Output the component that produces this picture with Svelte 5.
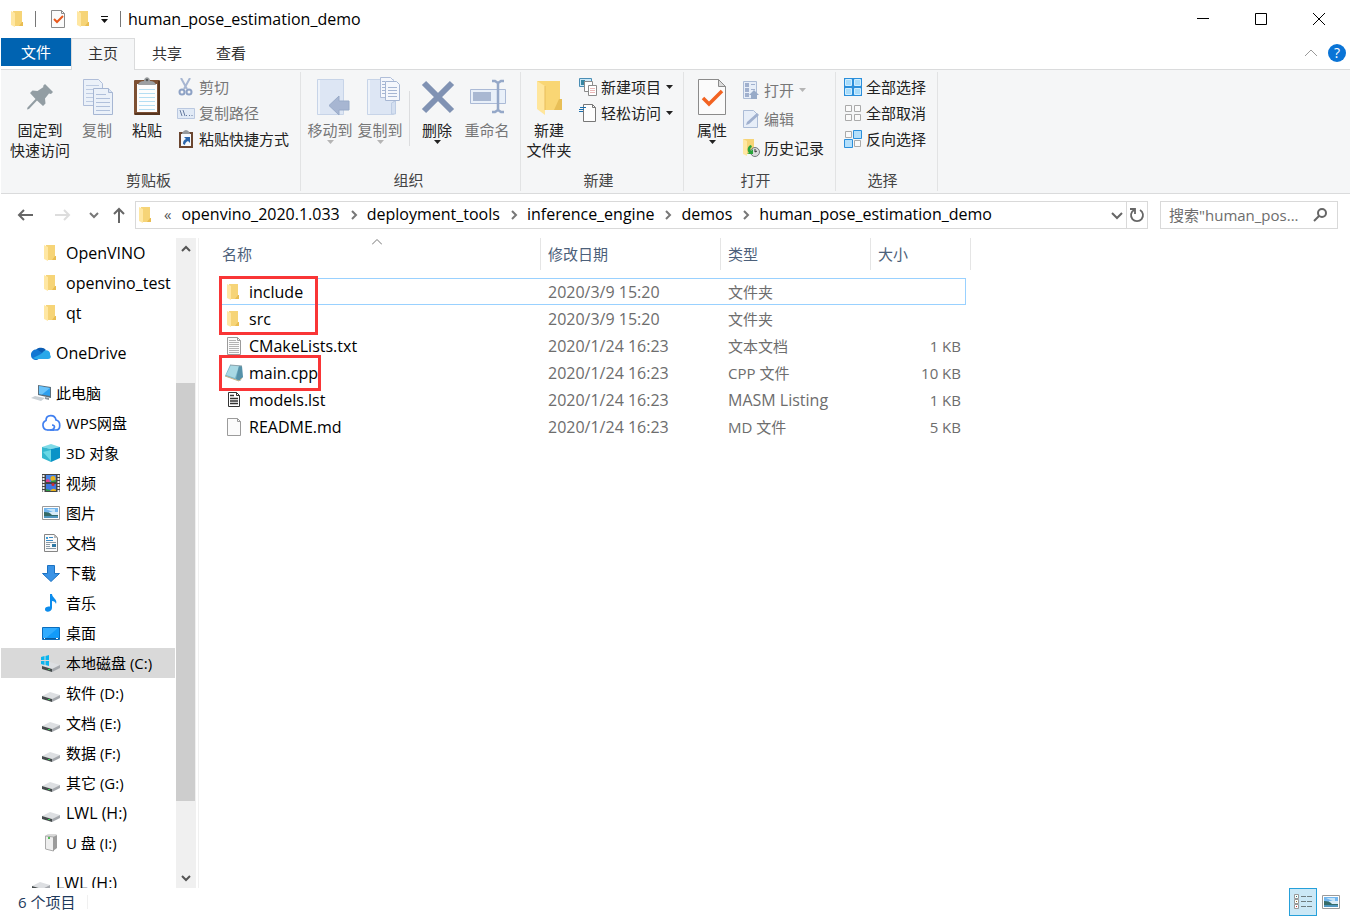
<script>
  let selected = $state('本地磁盘 (C:)');
  let focused = $state('include');
  let keyword = $state('');

  const tabs = ['主页', '共享', '查看'];
  let activeTab = $state('主页');

  const crumbs = ['openvino_2020.1.033', 'deployment_tools', 'inference_engine', 'demos', 'human_pose_estimation_demo'];

  // navigation pane, grouped the way the gaps fall
  const tree = [
    [
      { name: 'OpenVINO', icon: 'folder', level: 2 },
      { name: 'openvino_test', icon: 'folder', level: 2 },
      { name: 'qt', icon: 'folder', level: 2 }
    ],
    [{ name: 'OneDrive', icon: 'onedrive', level: 1 }],
    [
      { name: '此电脑', icon: 'pc', level: 1 },
      { name: 'WPS网盘', icon: 'wps', level: 2 },
      { name: '3D 对象', icon: 'cube', level: 2 },
      { name: '视频', icon: 'video', level: 2 },
      { name: '图片', icon: 'picture', level: 2 },
      { name: '文档', icon: 'document', level: 2 },
      { name: '下载', icon: 'download', level: 2 },
      { name: '音乐', icon: 'music', level: 2 },
      { name: '桌面', icon: 'desktop', level: 2 },
      { name: '本地磁盘 (C:)', icon: 'system', level: 2 },
      { name: '软件 (D:)', icon: 'drive', level: 2 },
      { name: '文档 (E:)', icon: 'drive', level: 2 },
      { name: '数据 (F:)', icon: 'drive', level: 2 },
      { name: '其它 (G:)', icon: 'drive', level: 2 },
      { name: 'LWL (H:)', icon: 'drive', level: 2 },
      { name: 'U 盘 (I:)', icon: 'usb', level: 2 }
    ],
    [{ name: 'LWL (H:)', icon: 'drive', level: 1 }]
  ];

  const files = [
    { name: 'include', icon: 'folder', date: '2020/3/9 15:20', type: '文件夹', size: '' },
    { name: 'src', icon: 'folder', date: '2020/3/9 15:20', type: '文件夹', size: '' },
    { name: 'CMakeLists.txt', icon: 'txt', date: '2020/1/24 16:23', type: '文本文档', size: '1 KB' },
    { name: 'main.cpp', icon: 'cpp', date: '2020/1/24 16:23', type: 'CPP 文件', size: '10 KB' },
    { name: 'models.lst', icon: 'lst', date: '2020/1/24 16:23', type: 'MASM Listing', size: '1 KB' },
    { name: 'README.md', icon: 'blank', date: '2020/1/24 16:23', type: 'MD 文件', size: '5 KB' }
  ];

  // pure latin text is set one pixel larger than chinese
  const isLatin = (text) => /^[ -~]+$/.test(text);
</script>

<!-- 20px icons: folders, drives, files -->
{#snippet icon(name)}
  <svg class="icon" width="20" height="20" viewBox="0 0 20 20" aria-hidden="true">
    {#if name === 'folder'}
      <path d="M5 2h9v11h1v4H5z" fill="#f6d477" />
      <path d="M14 13h1v4h-4z" fill="#e9bd52" />
      <path d="M3 2l4 2v14l-4-2z" fill="#ffe7a2" />
    {:else if name === 'onedrive'}
      <path d="M4 9a6 5 0 0 1 11-2l-5 5z" fill="#0a5cb3" />
      <path d="M0 12a5 5 0 0 1 7-5l7 5-8 5H4a5 5 0 0 1-4-5z" fill="#1277d3" />
      <path d="M13 8c3-2 7 1 6 4 2 2 0 4-2 4H4l-2-1 8-4z" fill="#28a8ea" />
    {:else if name === 'pc'}
      <path d="M7 2l13 2v11L7 12z" fill="#5d6f7c" />
      <path d="M8 3l11 2v8L8 11z" fill="#2d9fee" />
      <path d="M8 3l11 2-8 6.500-3-.5z" fill="#6cc4fa" />
      <path d="M0 15l4-2 10 2-4 3z" fill="#c9d0d5" />
      <path d="M14 14l4 1v2l-4-1z" fill="#8d979e" />
    {:else if name === 'wps'}
      <path d="M6 17a5 5 0 0 1-1-9.500C5 1 14 1 15 7c5 1 5 10 0 10H9c5 0 6-5 2-5" fill="none" stroke="#3f7ff0" stroke-width="1.700" />
      <path d="M6 17h7" stroke="#3f7ff0" stroke-width="1.700" />
    {:else if name === 'cube'}
      <path d="M1 4l9-3 9 3-9 2z" fill="#7fdbe8" />
      <path d="M1 4l9 2v13l-9-4z" fill="#35b8cf" />
      <path d="M2 9l8-2v11z" fill="#6bd8e5" />
      <path d="M10 6l9-2v11l-9 4z" fill="#0a93c7" />
    {:else if name === 'video'}
      <path d="M1 1h18v18H1z" fill="#444" />
      <path d="M5 2h10v7H5z" fill="#4a86e8" />
      <path d="M5 11h10v7H5z" fill="#3e78e0" />
      <path d="M5 7q3-3 4 2H5z" fill="#e33e90" />
      <path d="M9 18q3-4 6-1v1z" fill="#e8b21c" />
      <circle cx="12" cy="5.500" r="2.500" fill="#e8b21c" />
      <circle cx="12" cy="11.500" r="1.500" fill="#d32b32" />
      <path d="M10 8l5-1v2h-5zM5 16l4 1v1H5z" fill="#2f9b45" />
      <path d="M2.500 2v17M17.500 2v17" stroke="#f2f2f2" stroke-width="2" stroke-dasharray="2 1" />
    {:else if name === 'picture'}
      <path d="M1.500 3.500h17v13h-17z" fill="#fff" stroke="#9a9a9a" />
      <path d="M3 5h14v10H3z" fill="#72b6ee" />
      <path d="M5 6h9v4z" fill="#c5e4f8" />
      <path d="M8 9h9v3H9z" fill="#d8ebf7" />
      <path d="M3 9q6 0 8 3h6v2H3z" fill="#356b68" />
      <path d="M3 13h14v2H3z" fill="#4f95bd" />
    {:else if name === 'document'}
      <path d="M3.500 1.500h10l3 3v14h-13z" fill="#fafafa" stroke="#858585" />
      <path d="M13 1l4 4h-4z" fill="#b8b8b8" />
      <path d="M8 4.500h4M5 7.500h7" stroke="#3b8ac4" />
      <path d="M5 4h2v2H5z" fill="#3b9ddb" />
      <path d="M5 9.500h10M5 11.500h4M5 13.500h4M5 15.500h10" stroke="#8b9aa6" />
      <path d="M11 11h4v3h-4z" fill="#2f79a5" />
    {:else if name === 'download'}
      <path d="M6.500 2.500h7v8h5l-8.500 8-8.500-8h5z" fill="#3a93e6" stroke="#1c72c2" />
    {:else if name === 'music'}
      <path d="M9 1h2c0 4 6 5 4 10-.5-2-2-3-4-3v7c0 4-7 5-7 1.500 0-3 3-3 5-3z" fill="#0c8cec" />
    {:else if name === 'desktop'}
      <path d="M1.500 4.500h17v12h-17z" fill="#129bfa" stroke="#0b6dbd" />
      <path d="M2 5h15L5 15H2z" fill="#31acff" />
      <path d="M2 15.500h16" stroke="#0b5a9d" />
      <path d="M3 15.500h1M15 15.500h2" stroke="#fff" />
    {:else if name === 'drive' || name === 'system'}
      <path d="M1 13l8-4 10 3-8 4z" fill="#dddfe2" />
      <path d="M1 13l10 3v3L1 16z" fill="#444b4c" />
      <path d="M11 16l8-4v3l-8 4z" fill="#a5a8ad" />
      <path d="M7 16h2v1H7z" fill="#35c551" />
      {#if name === 'system'}
        <path d="M0 4l3.500-1v4H0zM4.500 3L8 2v5H4.500zM0 8h3.500v4L0 11zM4.500 8H8v5l-3.500-1z" fill="#0bb5ee" />
      {/if}
    {:else if name === 'usb'}
      <path d="M4 3l3-2h8l1 1-3 2z" fill="#d9d9d9" />
      <path d="M4.500 3l8 1v14l-8-2z" fill="#eee" stroke="#aaa" />
      <path d="M12 4l4-2v13l-4 3z" fill="#9b9b9b" />
      <path d="M7 4h2v2H7z" fill="#53bd58" />
    {:else if name === 'txt' || name === 'blank'}
      <path d="M3.500 1.500h10l3 3v14h-13z" fill="#fbfbfb" stroke="#9b9b9b" />
      <path d="M13.500 1.500v3h3" fill="none" stroke="#9b9b9b" />
      {#if name === 'txt'}
        <path d="M5 4.500h7M5 6.500h10M5 8.500h10M5 10.500h10M5 12.500h10M5 14.500h10M5 16.500h10" stroke="#b3b3b3" />
      {/if}
    {:else if name === 'cpp'}
      <path d="M6 2l12 1-3 15-14-5z" fill="#76b5ca" />
      <path d="M7 2l8 1-4 12-9-3z" fill="#a9d9e4" />
      <path d="M15 3h3l1 11-3 4-4-2z" fill="#5692a9" />
      <path d="M6 2l12 1" stroke="#8fa3ab" />
      <path d="M1 13l14 5 3-3" fill="none" stroke="#c9b68b" />
    {:else if name === 'lst'}
      <path d="M4.500 2.500h8l3 3v11h-11z" fill="#fff" stroke="#333" />
      <path d="M12.500 2.500v3h3" fill="none" stroke="#333" />
      <path d="M6 5.500h4M6 8.500h8M6 11h8M6 13.500h8" stroke="#333" stroke-width="1.500" />
    {/if}
  </svg>
{/snippet}

<!-- 36px ribbon icons -->
{#snippet bigIcon(name)}
  <svg class="icon" width="36" height="40" viewBox="0 0 36 40" aria-hidden="true">
    {#if name === 'pin'}
      <path d="M23 8l8 8-2 2-2-.5-4 5 .5 5-2.500 2.500-6-5.500-8 8.500-2 .5.5-2 8-8.500-5.500-6 2.500-2.500 5 .5 6-4-.5-1z" fill="#929da3" />
    {:else if name === 'copy'}
      <path d="M4.500 3.500h15l4 4v22h-19z" fill="#ebf1fa" stroke="#a9b9d6" />
      <path d="M7 9.500h13M7 13.500h13M7 17.500h13M7 21.500h13M7 25.500h13" stroke="#b7c7e0" />
      <path d="M14.500 12.500h15l4 4v22h-19z" fill="#ebf1fa" stroke="#9eb0d0" />
      <path d="M29.500 12.500v4h4" fill="#d6e1f2" stroke="#9eb0d0" />
      <path d="M17 18.500h10M17 22.500h14M17 26.500h14M17 30.500h14M17 34.500h14" stroke="#a9bbd8" />
    {:else if name === 'paste'}
      <rect x="5" y="4" width="26" height="35" rx="1" fill="#7d5033" />
      <path d="M30 5v33H6" fill="none" stroke="#57351f" stroke-width="2" />
      <path d="M8 8h20v28H8z" fill="#fdfdfd" />
      <path d="M10 13.500h16M10 17.500h16M10 21.500h16M10 25.500h16M10 29.500h16M10 33.500h16" stroke="#b5def3" />
      <path d="M9 9q1-4 6-4c0-5 6-5 6 0q5 0 6 4z" fill="#9c9fa2" />
      <circle cx="18" cy="4" r="1.300" fill="#55585a" />
    {:else if name === 'move'}
      <path d="M5.500 3.500h26v35h-26z" fill="#dbe5f4" stroke="#c3d1e7" />
      <path d="M7 4v34" stroke="#eef3fb" stroke-width="2" />
      <path d="M17 29.500l10-9.500v5h10v9H27v5z" fill="#9fb0ce" stroke="#8fa3c4" />
    {:else if name === 'copyto'}
      <path d="M5.500 3.500h26v35h-26z" fill="#dbe5f4" stroke="#c3d1e7" />
      <path d="M7 4v34" stroke="#eef3fb" stroke-width="2" />
      <path d="M29.500 27l4-2v13h-4z" fill="#d1ddf0" stroke="#b9c9e2" />
      <path d="M18.500 1.500h10l3 3v17h-13z" fill="#f5f8fd" stroke="#a9b9d6" />
      <path d="M20 5.500h3M20 8.500h3M20 11.500h3M20 14.500h3M20 17.500h3" stroke="#9eb0d0" />
      <path d="M23.500 5.500h11l3 3v16h-14z" fill="#f5f8fd" stroke="#9eb0d0" />
      <path d="M26 11.500h9M26 14.500h9M26 17.500h9M26 20.500h9" stroke="#9eb0d0" />
    {:else if name === 'delete'}
      <path d="M5 7l28 28M33 7L5 35" stroke="#8092b3" stroke-width="6" />
    {:else if name === 'rename'}
      <path d="M1.500 13.500h35v14h-35z" fill="#e8f0fa" stroke="#a3b4d3" />
      <path d="M4 16h18v9H4z" fill="#a1b2cf" />
      <path d="M23 5h3l3 2 3-2h3M23 36h3l3-2 3 2h3M29 6v29" fill="none" stroke="#8ba0c3" stroke-width="2.500" />
    {:else if name === 'newfolder'}
      <path d="M6 5h23v18h2v11H13z" fill="#f9d674" />
      <path d="M28 23h3v11h-8z" fill="#e8bf57" />
      <path d="M6 5l8 5v29l-8-6z" fill="#ffe69c" />
      <path d="M14 10v24" stroke="#e8bd5b" />
    {:else if name === 'props'}
      <path d="M4.500 3.500h20l7 7v28h-27z" fill="#fbfbfb" stroke="#8b8b8b" />
      <path d="M24.500 3.500v7h7z" fill="#dcdcdc" stroke="#8b8b8b" />
      <path d="M9 22l6 6 13-13" fill="none" stroke="#f26322" stroke-width="3.500" />
    {/if}
  </svg>
{/snippet}

<!-- 18px ribbon icons -->
{#snippet smallIcon(name)}
  <svg class="icon" width="18" height="18" viewBox="0 0 18 18" aria-hidden="true">
    {#if name === 'cut'}
      <path d="M4 0l6 11M13 0L7 11" stroke="#9fb0ce" stroke-width="2" />
      <circle cx="5" cy="14" r="2.500" fill="none" stroke="#8399c0" stroke-width="2" />
      <circle cx="12" cy="14" r="2.500" fill="none" stroke="#8399c0" stroke-width="2" />
    {:else if name === 'path'}
      <path d="M.5 4.500h17v10H.5z" fill="#dfe9f6" stroke="#b4c4de" />
      <path d="M3 6l2 6M6 6l2 6M9 11.500h1M12 11.500h1M14.500 11.500h1" stroke="#586f98" />
    {:else if name === 'shortcut'}
      <path d="M2 2h14v16H2z" fill="#6b4630" />
      <path d="M4 4h10v12H4z" fill="#f7fafd" />
      <path d="M5 3q4-6 8 0v1H5z" fill="#969a9d" />
      <path d="M7 7h6v6l-2-2c-2 1-3 2-3 4l-2-1c0-3 1-4 3-5z" fill="#2c66ab" />
    {:else if name === 'newitem'}
      <path d="M.5.5h12v8H.5z" fill="#cce8f7" stroke="#4b8eb5" />
      <path d="M2 2h4v5H2z" fill="#3787a3" />
      <path d="M5.500 3.500h8v10h-8z" fill="#fff" stroke="#8b8b8b" />
      <path d="M9.500 7.500h8v10h-8z" fill="#fff" stroke="#8b8b8b" />
      <path d="M11 10.500h5M11 12.500h5M11 14.500h5" stroke="#eab8b8" />
    {:else if name === 'access'}
      <path d="M4.500.5h9l3 3v14h-12z" fill="#fdfdfd" stroke="#777" />
      <path d="M13.500.5v3h3" fill="none" stroke="#777" />
      <path d="M1 3.500h6M0 5.500h5M0 7.500h4" stroke="#1b6fae" />
    {:else if name === 'open'}
      <path d="M1.500.5h13v17h-13z" fill="#e6eef9" stroke="#a5b6d3" />
      <path d="M3 2h4v4H3zM3 7h4v4H3zM3 12h4v4H3z" fill="#97a9ca" />
      <path d="M9 3.500h4M9 8.500h4" stroke="#97a9ca" />
      <path d="M7 14l5-5 5 5h-2v4h-6v-4z" fill="#8fa3c4" />
    {:else if name === 'edit'}
      <path d="M1.500.5h10l4 4v13h-14z" fill="#e6eef9" stroke="#a5b6d3" />
      <path d="M4 15l1-3L15 3l2 2L7 14z" fill="#97a9ca" />
    {:else if name === 'history'}
      <path d="M1 0h11v15H4z" fill="#f6d477" />
      <path d="M1 0l4 2v15l-4-2z" fill="#ffe7a2" />
      <circle cx="13" cy="13" r="4.500" fill="#d9dbdc" stroke="#73787b" />
      <path d="M13 10v3l2-1" fill="none" stroke="#333" />
      <path d="M9 6c-4 1-4 6-2 8l-2 1h6v-5l-2 2c-1-2-1-3 1-4z" fill="#28a43b" />
    {:else if name === 'all'}
      <path d="M0 0h18v18H0z" fill="#2b8fdb" />
      <path d="M1.500 1.500h6v6h-6zM10.500 1.500h6v6h-6zM1.500 10.500h6v6h-6zM10.500 10.500h6v6h-6z" fill="#a8dcfb" stroke="#d2eefe" />
    {:else if name === 'none'}
      <path d="M1.500 1.500h6v6h-6zM10.500 1.500h6v6h-6zM1.500 10.500h6v6h-6zM10.500 10.500h6v6h-6z" fill="#fafafa" stroke="#aaa" />
    {:else if name === 'invert'}
      <path d="M1.500 1.500h6v6h-6zM10.500 10.500h6v6h-6z" fill="#fafafa" stroke="#aaa" />
      <path d="M9.500.5h8v8h-8zM.5 9.500h8v8h-8z" fill="#b3dffb" stroke="#2b8fdb" />
    {/if}
  </svg>
{/snippet}

{#snippet caret()}
  <svg class="caret" width="7" height="4" viewBox="0 0 7 4" aria-hidden="true"><path d="M0 0h7L3.500 4z" fill="currentColor" /></svg>
{/snippet}

{#snippet chevron(d)}
  <svg class="icon" width="12" height="12" viewBox="0 0 12 12" aria-hidden="true"><path {d} fill="none" stroke="currentColor" stroke-width="2" /></svg>
{/snippet}

{#snippet big(name, lines, disabled = false, menu = false)}
  <button class="big" {disabled}>
    {@render bigIcon(name)}
    {#each lines as line}<span>{line}</span>{/each}
    {#if menu}{@render caret()}{/if}
  </button>
{/snippet}

{#snippet small(name, text, disabled = false, menu = false)}
  <button class="small" {disabled}>
    {@render smallIcon(name)}
    <span>{text}</span>
    {#if menu}{@render caret()}{/if}
  </button>
{/snippet}

<div class="window">
  <header class="titlebar">
    {@render icon('folder')}
    <i class="bar"></i>
    <button class="quick props" aria-label="属性">
      <svg class="icon" width="16" height="18" viewBox="0 0 16 18">
        <path d="M1.500.5h10l3 3v14h-13z" fill="#fbfbfb" stroke="#8b8b8b" />
        <path d="M11.500.5v3h3" fill="none" stroke="#8b8b8b" />
        <path d="M4 9l3 3 6-6" fill="none" stroke="#e8581c" stroke-width="2" />
      </svg>
    </button>
    <button class="quick" aria-label="新建文件夹">{@render icon('folder')}</button>
    <button class="quick custom" aria-label="自定义快速访问工具栏">
      <svg class="icon" width="7" height="7" viewBox="0 0 7 7"><path d="M0 0h7v1H0zM0 3h7L3.500 7z" fill="#111" /></svg>
    </button>
    <i class="bar"></i>
    <h1 class="latin">human_pose_estimation_demo</h1>
    <div class="controls">
      <button aria-label="最小化"><svg class="icon" width="12" height="12"><path d="M0 5.500h12" stroke="#000" /></svg></button>
      <button aria-label="最大化"><svg class="icon" width="12" height="12"><path d="M.5.5h11v11H.5z" fill="none" stroke="#000" /></svg></button>
      <button aria-label="关闭"><svg class="icon" width="12" height="12"><path d="M0 0l12 12M12 0L0 12" stroke="#000" /></svg></button>
    </div>
  </header>

  <nav class="tabs">
    <button class="file">文件</button>
    {#each tabs as tab}
      <button class="tab" class:active={tab === activeTab} onclick={() => (activeTab = tab)}>{tab}</button>
    {/each}
    <div class="help">
      <button aria-label="最小化功能区"><svg class="icon" width="12" height="8"><path d="M0 7l6-6 6 6" fill="none" stroke="#999" /></svg></button>
      <button class="round" aria-label="帮助">?</button>
    </div>
  </nav>

  <div class="ribbon">
    <section class="group clipboard">
      <div class="tools">
        <div class="wide">{@render big('pin', ['固定到', '快速访问'])}</div>
        {@render big('copy', ['复制'], true)}
        {@render big('paste', ['粘贴'])}
        <div class="stack">
          {@render small('cut', '剪切', true)}
          {@render small('path', '复制路径', true)}
          {@render small('shortcut', '粘贴快捷方式')}
        </div>
      </div>
      <h2>剪贴板</h2>
    </section>
    <section class="group organize">
      <div class="tools">
        {@render big('move', ['移动到'], true, true)}
        {@render big('copyto', ['复制到'], true, true)}
        <i class="divider"></i>
        {@render big('delete', ['删除'], false, true)}
        {@render big('rename', ['重命名'], true)}
      </div>
      <h2>组织</h2>
    </section>
    <section class="group create">
      <div class="tools">
        {@render big('newfolder', ['新建', '文件夹'])}
        <div class="stack">
          {@render small('newitem', '新建项目', false, true)}
          {@render small('access', '轻松访问', false, true)}
        </div>
      </div>
      <h2>新建</h2>
    </section>
    <section class="group">
      <div class="tools">
        {@render big('props', ['属性'], false, true)}
        <div class="stack loose">
          {@render small('open', '打开', true, true)}
          {@render small('edit', '编辑', true)}
          {@render small('history', '历史记录')}
        </div>
      </div>
      <h2>打开</h2>
    </section>
    <section class="group">
      <div class="tools">
        <div class="stack">
          {@render small('all', '全部选择')}
          {@render small('none', '全部取消')}
          {@render small('invert', '反向选择')}
        </div>
      </div>
      <h2>选择</h2>
    </section>
  </div>

  <div class="location">
    <button class="back" aria-label="返回"><svg class="icon" width="16" height="14"><path d="M16 7H2M7 2L2 7l5 5" fill="none" stroke="#666" stroke-width="2" /></svg></button>
    <button class="forward" aria-label="前进"><svg class="icon" width="16" height="14"><path d="M0 7h14M9 2l5 5-5 5" fill="none" stroke="#ddd" stroke-width="2" /></svg></button>
    <button class="recent" aria-label="最近浏览的位置"><svg class="icon" width="10" height="8"><path d="M1 2l4 4 4-4" fill="none" stroke="#777" stroke-width="2" /></svg></button>
    <button class="up" aria-label="上移"><svg class="icon" width="14" height="16"><path d="M7 16V2M2 7l5-5 5 5" fill="none" stroke="#666" stroke-width="2" /></svg></button>
    <div class="address">
      {@render icon('folder')}
      <span class="more">«</span>
      {#each crumbs as crumb, i}
        {#if i > 0}<span class="sep">{@render chevron('M4 2l4 4-4 4')}</span>{/if}
        <a class="latin" href="#{crumb}">{crumb}</a>
      {/each}
      <button class="drop" aria-label="上一个位置">{@render chevron('M1 4l5 5 5-5')}</button>
      <button class="refresh" aria-label="刷新">
        <svg class="icon" width="16" height="16" viewBox="0 0 16 16"><path d="M11 3a6 6 0 1 1-6 0M1 2h5v5" fill="none" stroke="#666" stroke-width="1.800" /></svg>
      </button>
    </div>
    <label class="search">
      <input type="text" bind:value={keyword} aria-label="搜索" placeholder={'搜索"human_pos...'} />
      <svg class="icon" width="14" height="14"><circle cx="9" cy="5" r="4" fill="none" stroke="#666" stroke-width="2" /><path d="M6 8l-5 5" stroke="#666" stroke-width="2" /></svg>
    </label>
  </div>

  <main>
    <aside>
      <div class="tree">
        {#each tree as part}
          <ul>
            {#each part as item}
              <li>
                <button class="node level{item.level}" class:selected={item.name === selected} onclick={() => (selected = item.name)}>
                  {@render icon(item.icon)}
                  <span class:latin={isLatin(item.name)}>{item.name}</span>
                </button>
              </li>
            {/each}
          </ul>
        {/each}
      </div>
      <div class="scroll">
        <button aria-label="向上滚动">{@render chevron('M2 8l4-4 4 4')}</button>
        <div class="track"><div class="thumb"></div></div>
        <button aria-label="向下滚动">{@render chevron('M2 4l4 4 4-4')}</button>
      </div>
    </aside>

    <div class="content">
      <table>
        <colgroup>
          <col class="c-name" /><col class="c-date" /><col class="c-type" /><col class="c-size" /><col class="c-end" />
        </colgroup>
        <thead>
          <tr>
            <th>名称<svg class="sort" width="10" height="6"><path d="M0 5.500l5-5 5 5" fill="none" stroke="#777" /></svg></th>
            <th>修改日期</th>
            <th>类型</th>
            <th>大小</th>
            <th></th>
          </tr>
        </thead>
        <tbody>
          {#each files as file}
            <tr class:focused={file.name === focused} onclick={() => (focused = file.name)}>
              <td><div class="name">{@render icon(file.icon)}<span class="latin">{file.name}</span></div></td>
              <td class="latin">{file.date}</td>
              <td class:latin={isLatin(file.type)}>{file.type}</td>
              <td class="size">{file.size}</td>
              <td class="end"></td>
            </tr>
          {/each}
        </tbody>
      </table>
      <div class="mark folders"></div>
      <div class="mark source"></div>
    </div>
  </main>

  <footer>
    <span class="count">6 个项目</span>
    <div class="views">
      <button class="on" aria-label="详细信息">
        <svg class="icon" width="18" height="16" viewBox="0 0 18 16">
          <path d="M.5.5h4v4h-4zM.5 5.500h4v4h-4zM.5 10.500h4v4h-4z" fill="#fff" stroke="#999" />
          <path d="M2 2h1v1H2z" fill="#267a74" /><path d="M2 7h1v1H2z" fill="#9a792a" /><path d="M2 12h1v1H2z" fill="#d02c2c" />
          <path d="M7 2.500h5M13 2.500h5M7 7.500h5M13 7.500h5M7 12.500h5M13 12.500h5" stroke="#6f7d80" />
        </svg>
      </button>
      <button aria-label="大缩略图">{@render icon('picture')}</button>
    </div>
  </footer>
</div>

<style>
  :global(body) {
    margin: 0;
    background: #fff;
  }

  .window {
    display: flex;
    flex-direction: column;
    height: 100vh;
    padding: 0 1px;
    box-sizing: border-box;
    overflow: hidden;
    color: #000;
    font: 15px/20px 'Open Sans', 'Noto Sans CJK SC', sans-serif;
  }

  button {
    display: flex;
    align-items: center;
    padding: 0;
    border: 0;
    background: none;
    color: inherit;
    font: inherit;
    white-space: nowrap;
  }

  .icon, .caret {
    display: block;
    flex: none;
  }

  h1, h2 {
    margin: 0;
    font: inherit;
  }

  .latin { font-size: 16px; }

  ul {
    margin: 0 0 10px;
    padding: 0;
    list-style: none;
  }

  /* title bar */
  .titlebar {
    display: flex;
    align-items: center;
    flex: none;
    height: 38px;
    padding-left: 7px;
  }
  .bar {
    width: 1px;
    height: 16px;
    margin-left: 7px;
    background: #777;
  }
  .quick.props { margin: 0 8px 0 14px; }
  .quick.custom { margin: 0 6px 0 7px; }
  .quick.custom + .bar { margin-left: 6px; }
  h1 { margin-left: 7px; }
  .controls {
    display: flex;
    margin: 0 2px 0 auto;
  }
  .controls button {
    justify-content: center;
    width: 58px;
    height: 38px;
  }

  /* tabs */
  .tabs {
    display: flex;
    flex: none;
    height: 32px;
    box-sizing: border-box;
    border-bottom: 1px solid #dadbdc;
  }
  .tabs > button {
    justify-content: center;
    height: 30px;
    color: #333;
  }
  .tabs > .file {
    width: 70px;
    height: 28px;
    background: #0063b1;
    color: #fff;
  }
  .tabs > .tab {
    width: 64px;
    box-sizing: border-box;
    border: 1px solid transparent;
    border-bottom: 0;
    padding-bottom: 2px;
  }
  .tabs > .tab.active {
    height: 32px;
    padding-bottom: 4px;
    border-color: #dadbdc;
    background: #f5f6f7;
  }
  .help {
    display: flex;
    gap: 11px;
    align-items: center;
    margin: 0 4px 0 auto;
    padding-bottom: 2px;
  }
  .round {
    justify-content: center;
    width: 18px;
    height: 18px;
    border-radius: 50%;
    background: #0a74d6;
    color: #fff;
    font-size: 14px;
  }

  /* ribbon */
  .ribbon {
    display: flex;
    flex: none;
    height: 123px;
    border-bottom: 1px solid #dadbdc;
    background: #f5f6f7;
  }
  .group {
    display: flex;
    flex-direction: column;
    margin: 2px 0;
    padding: 0 11px 0 3px;
    border-right: 1px solid #e2e3e4;
  }
  .group.clipboard { padding-left: 7px; }
  .group.organize { padding: 0 8px 0 4px; }
  .group.create { padding-right: 10px; }
  .tools {
    display: flex;
    flex: 1;
  }
  h2 {
    height: 21px;
    color: #444;
    text-align: center;
  }
  .big {
    flex-direction: column;
    width: 50px;
    padding-top: 4px;
    color: #222;
  }
  .big .icon {
    margin-bottom: 4px;
    overflow: visible;
  }
  .big span { height: 20px; }
  .wide .big { width: 64px; }
  .small {
    gap: 4px;
    height: 26px;
    color: #222;
  }
  .small .caret { margin-left: 1px; }
  .loose { padding-top: 1px; }
  .loose .small { height: 29px; }
  button:disabled { color: #777; }
  button:disabled .icon { opacity: 0.9; }
  button:disabled .caret { color: #b5b5b5; }
  .stack {
    margin: 2px 0 0 5px;
  }
  .divider {
    width: 1px;
    height: 55px;
    margin: 19px 2px 0 4px;
    background: #dcdddf;
  }

  /* address row */
  .location {
    display: flex;
    align-items: center;
    flex: none;
    height: 44px;
    padding: 0 12px 2px 16px;
    box-sizing: border-box;
  }
  .forward { margin-left: 22px; }
  .recent { margin-left: 18px; }
  .up { margin: 0 9px 0 13px; }
  .address {
    display: flex;
    align-items: center;
    flex: 1;
    height: 28px;
    box-sizing: border-box;
    border: 1px solid #d9d9d9;
  }
  .address a {
    padding-bottom: 2px;
    color: #000;
    text-decoration: none;
  }
  .more {
    margin: 0 10px 0 8px;
    padding-bottom: 2px;
    color: #555;
  }
  .sep {
    margin: 0 7px 0 8px;
    color: #777;
  }
  .drop {
    margin-left: auto;
    padding: 0 3px;
    color: #666;
  }
  .refresh {
    align-self: stretch;
    padding: 0 2px;
    border-left: 1px solid #d9d9d9;
  }
  .search {
    display: flex;
    align-items: center;
    width: 178px;
    height: 28px;
    margin-left: 12px;
    padding: 0 10px 0 8px;
    box-sizing: border-box;
    border: 1px solid #d9d9d9;
  }
  .search input {
    flex: 1;
    min-width: 0;
    padding: 0;
    border: 0;
    outline: 0;
    font: inherit;
  }
  .search input::placeholder { color: #6d6d6d; }

  /* body */
  main {
    display: flex;
    flex: 1;
    min-height: 0;
  }
  aside {
    display: flex;
    flex: none;
    width: 197px;
    border-right: 1px solid #f0f0f0;
  }
  .tree {
    flex: 1;
    overflow: hidden;
  }
  .node {
    gap: 5px;
    width: 174px;
    height: 30px;
    padding-left: 40px;
  }
  .node.level1 { padding-left: 30px; }
  .node.selected { background: #d9d9d9; }
  .scroll {
    display: flex;
    flex-direction: column;
    width: 20px;
    margin-right: 2px;
    background: #f0f0f0;
  }
  .scroll button {
    justify-content: center;
    width: 19px;
    height: 21px;
    color: #555;
  }
  .track {
    display: flex;
    flex-direction: column;
    flex: 1;
  }
  .track::before {
    content: '';
    flex: 124;
  }
  .track::after {
    content: '';
    flex: 66;
  }
  .thumb {
    flex: 418;
    width: 19px;
    background: #cdcdcd;
  }

  .content {
    position: relative;
    flex: 1;
    padding-left: 20px;
  }
  table {
    width: 752px;
    table-layout: fixed;
    border-spacing: 0;
  }
  .c-name { width: 322px; }
  .c-date { width: 180px; }
  .c-type { width: 150px; }
  .c-size { width: 95px; }
  .c-end { width: 5px; }
  th {
    position: relative;
    height: 32px;
    padding: 0 0 0 7px;
    box-sizing: border-box;
    border-right: 1px solid #e5e5e5;
    color: #4c607a;
    font-weight: normal;
    text-align: left;
  }
  th:first-child { padding-left: 3px; }
  th:nth-child(4) { border-right: 0; }
  th:last-child { padding: 0; }
  .sort {
    position: absolute;
    top: 1px;
    left: 153px;
  }
  tbody::before {
    content: '';
    display: block;
    height: 8px;
  }
  td {
    height: 27px;
    padding: 0 0 0 7px;
    box-sizing: border-box;
    border: solid transparent;
    border-width: 1px 0;
    color: #6d6d6d;
  }
  td:first-child {
    padding-left: 5px;
    color: #000;
  }
  td.size {
    padding: 0 4px 0 0;
    border-right-width: 1px;
    text-align: right;
  }
  td.end { padding: 0; }
  .focused td:not(.end) { border-color: #99d1ff; }
  .name {
    display: flex;
    gap: 5px;
    align-items: center;
  }
  .mark {
    position: absolute;
    left: 20px;
    box-sizing: border-box;
    border: 3px solid #f93536;
    pointer-events: none;
  }
  .mark.folders {
    top: 38px;
    width: 99px;
    height: 59px;
  }
  .mark.source {
    top: 117px;
    width: 102px;
    height: 36px;
  }

  /* status bar */
  footer {
    display: flex;
    align-items: center;
    justify-content: space-between;
    flex: none;
    height: 30px;
    padding: 0 9px 2px 17px;
    box-sizing: border-box;
  }
  .count {
    padding-right: 12px;
    border-right: 1px solid #f0f0f0;
    color: #1e395b;
    line-height: 14px;
  }
  .views {
    display: flex;
    gap: 4px;
  }
  .views .on {
    justify-content: center;
    width: 28px;
    height: 28px;
    box-sizing: border-box;
    border: 1px solid #26a0da;
    background: #cbe8f6;
  }
</style>
